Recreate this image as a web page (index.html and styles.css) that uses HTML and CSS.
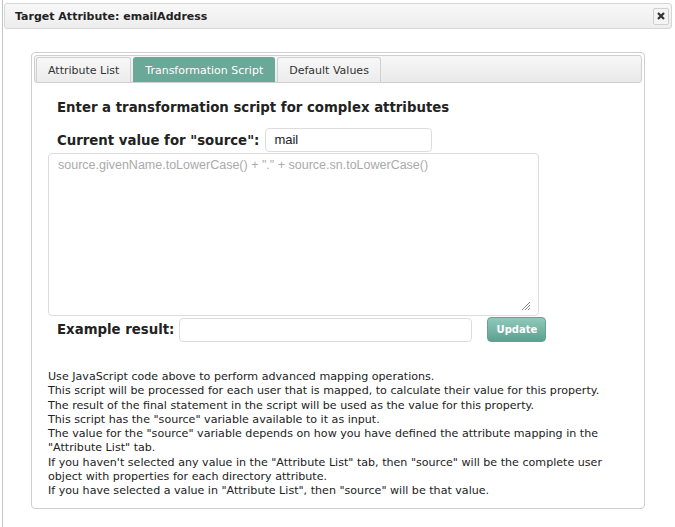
FILE: index.html
```html
<!DOCTYPE html>
<html>
<head>
<meta charset="utf-8">
<link rel="stylesheet" href="styles.css">
</head>
<body>
<div class="dialog">
  <div class="titlebar">
    <span class="title">Target Attribute: emailAddress</span>
    <span class="close"><svg width="8" height="8" viewBox="0 0 8 8"><path d="M1 1 L7 7 M7 1 L1 7" stroke="#333" stroke-width="2.2" fill="none"/></svg></span>
  </div>
  <div class="content">
    <div class="panel">
      <div class="tabbar">
        <div class="tab">Attribute List</div>
        <div class="tab active">Transformation Script</div>
        <div class="tab">Default Values</div>
      </div>
      <div class="tabbody">
        <h2 class="heading">Enter a transformation script for complex attributes</h2>
        <div class="row current">
          <label class="label">Current value for "source":</label>
          <div class="input source-input">mail</div>
        </div>
        <div class="textarea">
          <span class="placeholder">source.givenName.toLowerCase() + "." + source.sn.toLowerCase()</span>
          <svg class="grip" width="10" height="10" viewBox="0 0 10 10"><path d="M9 1 L1 9 M9 4 L4 9 M9 7 L7 9" stroke="#888" stroke-width="1" fill="none"/></svg>
        </div>
        <div class="row example">
          <label class="label">Example result:</label>
          <div class="input result-input"></div>
          <button class="update">Update</button>
        </div>
        <div class="help">
          Use JavaScript code above to perform advanced mapping operations.<br>
          This script will be processed for each user that is mapped, to calculate their value for this property.<br>
          The result of the final statement in the script will be used as the value for this property.<br>
          This script has the "source" variable available to it as input.<br>
          The value for the "source" variable depends on how you have defined the attribute mapping in the "Attribute List" tab.<br>
          If you haven't selected any value in the "Attribute List" tab, then "source" will be the complete user object with properties for each directory attribute.<br>
          If you have selected a value in "Attribute List", then "source" will be that value.
        </div>
      </div>
    </div>
  </div>
</div>
</body>
</html>
```
FILE: styles.css
```css
* { box-sizing: border-box; }
html, body { margin: 0; padding: 0; background: #fff; }
body {
  font-family: "DejaVu Sans", Verdana, sans-serif;
  color: #222;
  width: 675px;
  height: 527px;
  overflow: hidden;
}
.dialog {
  margin-left: 2px;
  border-left: 1px solid #c4c4c4;
  height: 527px;
  padding-top: 3px;
}
.titlebar {
  margin: 0 3px 0 1px;
  height: 26px;
  border: 1px solid #d6d6d6;
  border-radius: 3px;
  background: linear-gradient(#f8f8f8, #ededed);
  display: flex;
  align-items: center;
  justify-content: space-between;
  padding: 0 2px 0 10px;
}
.title {
  font-weight: bold;
  font-size: 11px;
  color: #222;
}
.close {
  width: 16px;
  height: 17px;
  border: 1px solid #d0d0d0;
  border-radius: 2px;
  background: #f4f4f4;
  display: flex;
  align-items: center;
  justify-content: center;
}
.content {
  padding: 23px 30px 0 28px;
}
.panel {
  border: 1px solid #cfcfcf;
  border-radius: 4px;
  padding: 2px;
  height: 457px;
}
.tabbar {
  border: 1px solid #d0d0d0;
  border-radius: 3px;
  background: linear-gradient(#f7f7f7, #e9e9e9);
  display: flex;
  gap: 2px;
  padding: 1px 0 0 1px;
  height: 28px;
}
.tab {
  border: 1px solid #d0d0d0;
  border-bottom: none;
  border-radius: 3px 3px 0 0;
  background: linear-gradient(#f7f7f7, #ececec);
  font-size: 11px;
  color: #333;
  line-height: 25px;
  padding: 0 11px;
}
.tab.active {
  background: #6aa898;
  border-color: #6aa898;
  color: #fff;
}
.tabbody {
  padding: 0 0 0 14px;
}
.heading {
  margin: 16px 0 0 9px;
  font-size: 13.3px;
  font-weight: bold;
  color: #222;
  line-height: 18px;
}
.row {
  display: flex;
  align-items: center;
}
.current {
  margin: 11px 0 0 9px;
}
.label {
  font-size: 13.3px;
  font-weight: bold;
  color: #222;
}
.input {
  border: 1px solid #ddd;
  border-radius: 4px;
  background: #fff;
  height: 24px;
  font-size: 13px;
  color: #222;
  padding: 0 8px;
  line-height: 22px;
  font-family: "Liberation Sans", Arial, sans-serif;
}
.source-input {
  margin-left: 6px;
  width: 167px;
}
.textarea {
  position: relative;
  margin-top: 1px;
  width: 491px;
  height: 163px;
  border: 1px solid #ddd;
  border-radius: 4px;
  padding: 0 9px;
}
.placeholder {
  font-family: "Liberation Sans", Arial, sans-serif;
  font-size: 12.5px;
  color: #aaa;
}
.grip {
  position: absolute;
  right: 7px;
  bottom: 4px;
}
.example {
  margin: 1px 0 0 9px;
}
.result-input {
  margin-left: 5px;
  width: 293px;
}
.update {
  margin-left: 15px;
  width: 59px;
  height: 25px;
  border: 1px solid #64a393;
  border-radius: 4px;
  background: linear-gradient(#8fcabb, #5e9f8f);
  color: #fff;
  font-family: "DejaVu Sans", Verdana, sans-serif;
  font-weight: bold;
  font-size: 10px;
  padding: 0;
}
.help {
  margin-top: 28px;
  font-size: 11.1px;
  line-height: 14.3px;
  color: #222;
  width: 560px;
}
```
